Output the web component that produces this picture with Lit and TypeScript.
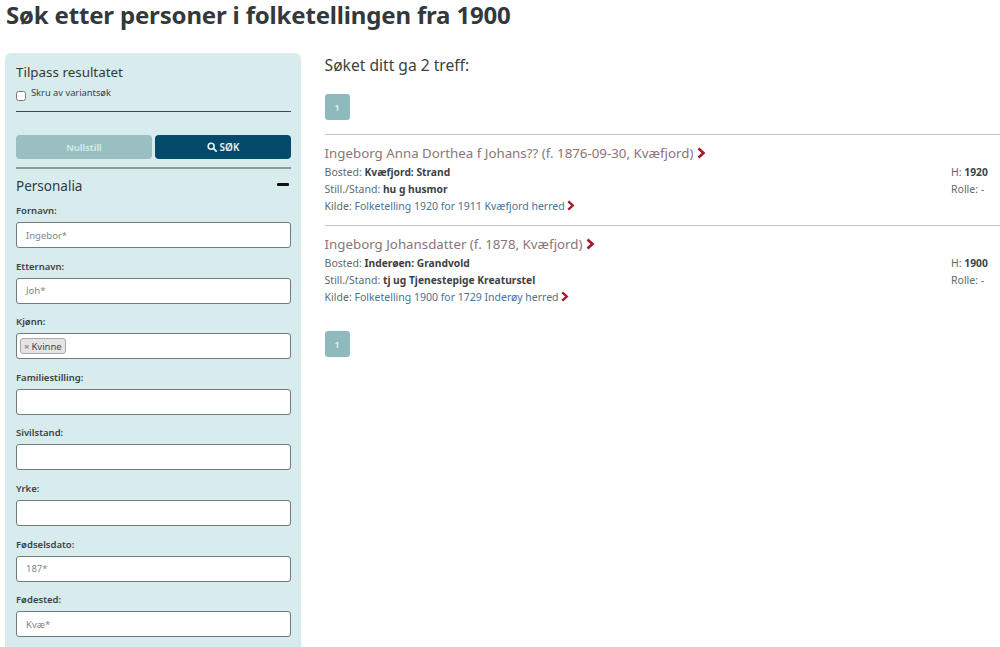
import { LitElement, html, css, nothing } from "lit";
import { customElement } from "lit/decorators.js";

const chevron = html`<svg class="chev" viewBox="0 0 10 12" aria-hidden="true"><path d="M2.5 1.5 L7.5 6 L2.5 10.5" fill="none" stroke="currentColor" stroke-width="2.6"/></svg>`;

const fields: { label: string; value?: string; tag?: string }[] = [
  { label: "Fornavn:", value: "Ingebor*" },
  { label: "Etternavn:", value: "Joh*" },
  { label: "Kjønn:", tag: "Kvinne" },
  { label: "Familiestilling:" },
  { label: "Sivilstand:" },
  { label: "Yrke:" },
  { label: "Fødselsdato:", value: "187*" },
  { label: "Fødested:", value: "Kvæ*" },
];

const results = [
  {
    name: "Ingeborg Anna Dorthea f Johans?? (f. 1876-09-30, Kvæfjord)",
    bosted: "Kvæfjord: Strand",
    stand: "hu g husmor",
    kilde: "Folketelling 1920 for 1911 Kvæfjord herred",
    h: "1920",
  },
  {
    name: "Ingeborg Johansdatter (f. 1878, Kvæfjord)",
    bosted: "Inderøen: Grandvold",
    stand: "tj ug Tjenestepige Kreaturstel",
    kilde: "Folketelling 1900 for 1729 Inderøy herred",
    h: "1900",
  },
];

@customElement("app-root")
export class AppRoot extends LitElement {
  static styles = css`
    :host {
      display: block;
      height: 647px;
      overflow: hidden;
      background: #fff;
      color: #3a3f42;
      font-family: "Noto Sans", "Open Sans", sans-serif;
      font-size: 10.5px;
    }
    * { box-sizing: border-box; }
    h1 {
      margin: 0;
      height: 53px;
      padding: 0 0 0 6px;
      font-size: 24px;
      line-height: 30px;
      font-weight: 700;
      color: #33383b;
      letter-spacing: -0.17px;
      white-space: nowrap;
    }
    .page {
      display: grid;
      grid-template-columns: 296px 1fr;
      column-gap: 23.6px;
      padding-left: 5px;
    }
    .side {
      background: #d8ecee;
      border-radius: 6px 6px 0 0;
      padding: 11px 10px 20px 11px;
      height: 700px;
    }
    .side h2 {
      margin: 0;
      font-size: 13.4px;
      font-weight: 400;
      line-height: 17px;
      color: #33383b;
    }
    .check {
      display: flex;
      align-items: flex-start;
      gap: 5px;
      margin-top: 6px;
      height: 19px;
      font-size: 9.3px;
      line-height: 12px;
    }
    .check input {
      margin: 4px 0 0;
      width: 10px;
      height: 10px;
    }
    .rule { border-top: 1px solid #3b4a4e; margin-top: 5px; }
    .buttons {
      display: grid;
      grid-template-columns: 1fr 1fr;
      column-gap: 3px;
      margin-top: 23px;
    }
    .btn {
      height: 24px;
      border-radius: 4px;
      display: flex;
      align-items: center;
      justify-content: center;
      gap: 3px;
      font-size: 9.5px;
      font-weight: 600;
      color: #fff;
    }
    .btn.reset { background: #9abfc0; color: #d8ecee; }
    .btn.go { background: #03496a; color: #e8f2f5; font-size: 10px; }
    .btn svg { width: 10px; height: 10px; }
    .rule2 { border-top: 2px solid #8b9a9b; margin-top: 8px; }
    .section {
      display: flex;
      justify-content: space-between;
      align-items: center;
      margin-top: 7px;
      height: 20px;
      font-size: 13.5px;
      color: #33383b;
    }
    .minus {
      width: 12px;
      height: 3px;
      margin: 0 2px 3px 0;
      background: #111;
      border-radius: 1px;
    }
    .fields { display: flex; flex-direction: column; row-gap: 4.6px; margin-top: 1px; }
    label {
      display: block;
      height: 25px;
      padding-top: 7px;
      font-size: 9.5px;
      line-height: 14px;
      font-weight: 600;
      color: #3a4245;
    }
    .input {
      height: 26px;
      background: #fff;
      border: 1px solid #6f7b7c;
      border-radius: 3px;
      display: flex;
      align-items: center;
      padding-left: 9px;
      font-size: 9.5px;
      color: #808688;
    }
    .input.has-tag { padding-left: 3px; }
    .tag {
      display: flex;
      align-items: center;
      gap: 2px;
      height: 16px;
      padding: 0 3px;
      background: #e4e4e4;
      border: 1px solid #aaa;
      border-radius: 3px;
      color: #444;
      font-size: 9.5px;
    }
    .tag span { color: #888; font-weight: 700; }
    .main { min-width: 0; }
    .hits {
      margin-top: 2px;
      font-size: 15.6px;
      line-height: 21px;
      color: #3a3f42;
    }
    .pager {
      width: 25px;
      height: 26px;
      border-radius: 3px;
      background: #8fbabd;
      color: #e8f3f4;
      display: flex;
      align-items: center;
      justify-content: center;
      font-size: 9px;
      font-weight: 600;
    }
    .pager.top { margin-top: 18px; }
    .pager.bottom { margin-top: 15px; }
    .list { margin-top: 14px; }
    .result {
      border-top: 1px solid #c4c4c4;
      padding-top: 8px;
      height: 91px;
      display: grid;
      grid-template-columns: 1fr 49px;
      grid-template-rows: 21px 17px 17px 17px;
    }
    .name {
      grid-column: 1 / 3;
      font-size: 13.3px;
      line-height: 20px;
      color: #8a7579;
      white-space: nowrap;
    }
    .row { font-size: 10.5px; line-height: 17px; color: #62686b; white-space: nowrap; }
    .row b { font-size: 10.25px; font-weight: 700; color: #3d4245; }
    .row a { color: #4a7394; text-decoration: none; }
    .chev { width: 9px; height: 11px; color: #a3182c; vertical-align: -1px; margin-left: -1px; }
    .name .chev { width: 10px; height: 12px; }
  `;

  render() {
    return html`
      <h1>Søk etter personer i folketellingen fra 1900</h1>
      <div class="page">
        <aside class="side">
          <h2>Tilpass resultatet</h2>
          <div class="check"><input type="checkbox" /><span>Skru av variantsøk</span></div>
          <div class="rule"></div>
          <div class="buttons">
            <div class="btn reset">Nullstill</div>
            <div class="btn go">
              <svg viewBox="0 0 12 12" aria-hidden="true"><circle cx="5" cy="5" r="3.6" fill="none" stroke="currentColor" stroke-width="1.9"/><path d="M7.6 7.6 L11 11" stroke="currentColor" stroke-width="2.2" stroke-linecap="round"/></svg>
              SØK
            </div>
          </div>
          <div class="rule2"></div>
          <div class="section"><span>Personalia</span><div class="minus"></div></div>
          <div class="fields">
            ${fields.map(
              (f) => html`
                <div>
                  <label>${f.label}</label>
                  <div class="input ${f.tag ? "has-tag" : ""}">
                    ${f.tag ? html`<div class="tag"><span>×</span>${f.tag}</div>` : f.value ?? nothing}
                  </div>
                </div>
              `
            )}
          </div>
        </aside>
        <main class="main">
          <div class="hits">Søket ditt ga 2 treff:</div>
          <div class="pager top">1</div>
          <div class="list">
            ${results.map(
              (r) => html`
                <div class="result">
                  <div class="name">${r.name} ${chevron}</div>
                  <div class="row">Bosted: <b>${r.bosted}</b></div>
                  <div class="row">H: <b>${r.h}</b></div>
                  <div class="row">Still./Stand: <b>${r.stand}</b></div>
                  <div class="row">Rolle: -</div>
                  <div class="row">Kilde: <a>${r.kilde}</a> ${chevron}</div>
                </div>
              `
            )}
          </div>
          <div class="pager bottom">1</div>
        </main>
      </div>
    `;
  }
}
